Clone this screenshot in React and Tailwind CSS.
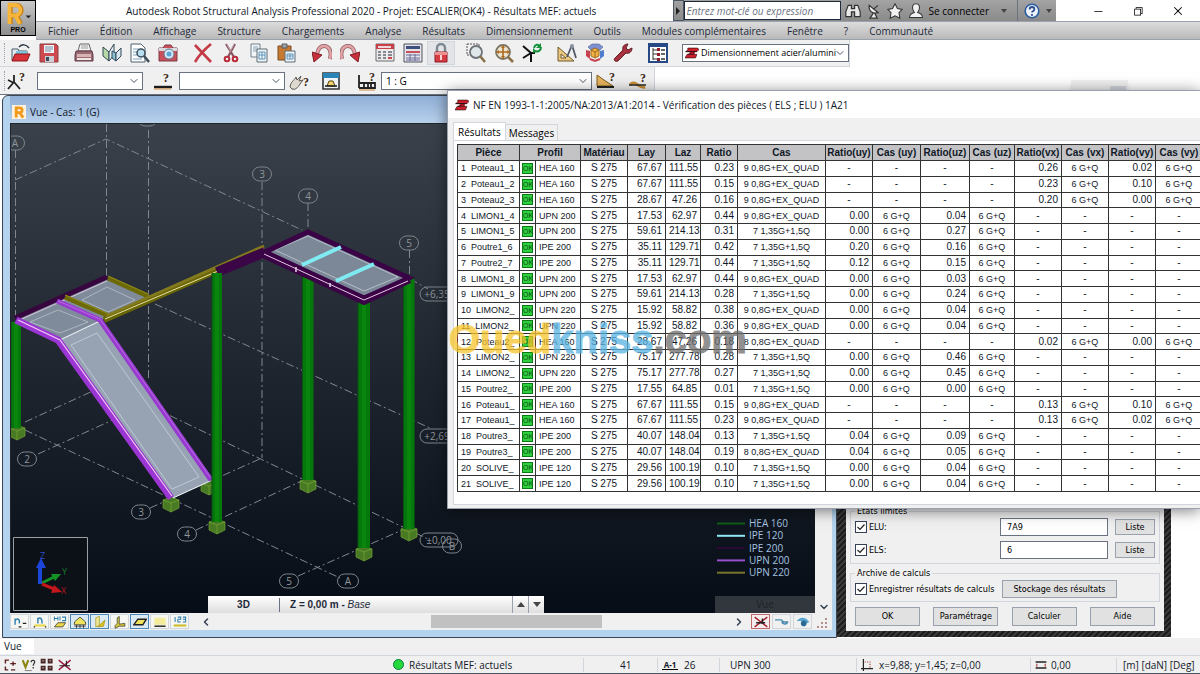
import React, { useState } from "react";
import { FiChevronDown, FiChevronLeft, FiChevronRight, FiChevronUp } from "react-icons/fi";
import { VscChromeClose, VscChromeMinimize, VscChromeRestore } from "react-icons/vsc";

const LOAD_QUAD = "9 0,8G+EX_QUAD";
const LOAD_QUAD_8 = "8 0,8G+EX_QUAD";
const LOAD_ELU = "7 1,35G+1,5Q";

const columns = [
  { label: "Lay", width: "w-[38px]" },
  { label: "Laz", width: "w-[35px]" },
  { label: "Ratio", width: "w-[37px]" },
  { label: "Cas", width: "w-[88px]" },
  { label: "Ratio(uy)", width: "w-[47px]" },
  { label: "Cas (uy)", width: "w-[48px]" },
  { label: "Ratio(uz)", width: "w-[49px]" },
  { label: "Cas (uz)", width: "w-[45px]" },
  { label: "Ratio(vx)", width: "w-[47px]" },
  { label: "Cas (vx)", width: "w-[47px]" },
  { label: "Ratio(vy)", width: "w-[47px]" },
  { label: "Cas (vy)", width: "w-[47px]" },
];

// name, profile, lay, laz, ratio, case, uy, uz, vx, vy
const members = [
  ["Poteau1_1", "HEA 160", "67.67", "111.55", "0.23", LOAD_QUAD, null, null, "0.26", "0.02"],
  ["Poteau1_2", "HEA 160", "67.67", "111.55", "0.15", LOAD_QUAD, null, null, "0.23", "0.10"],
  ["Poteau2_3", "HEA 160", "28.67", "47.26", "0.16", LOAD_QUAD, null, null, "0.20", "0.00"],
  ["LIMON1_4", "UPN 200", "17.53", "62.97", "0.44", LOAD_QUAD, "0.00", "0.04", null, null],
  ["LIMON1_5", "UPN 200", "59.61", "214.13", "0.31", LOAD_ELU, "0.00", "0.27", null, null],
  ["Poutre1_6", "IPE 200", "35.11", "129.71", "0.42", LOAD_ELU, "0.20", "0.16", null, null],
  ["Poutre2_7", "IPE 200", "35.11", "129.71", "0.44", LOAD_ELU, "0.12", "0.15", null, null],
  ["LIMON1_8", "UPN 200", "17.53", "62.97", "0.44", LOAD_QUAD, "0.00", "0.03", null, null],
  ["LIMON1_9", "UPN 200", "59.61", "214.13", "0.28", LOAD_ELU, "0.00", "0.24", null, null],
  ["LIMON2_", "UPN 220", "15.92", "58.82", "0.38", LOAD_QUAD, "0.00", "0.04", null, null],
  ["LIMON2_", "UPN 220", "15.92", "58.82", "0.36", LOAD_QUAD, "0.00", "0.04", null, null],
  ["Poteau2_", "HEA 160", "28.67", "47.26", "0.18", LOAD_QUAD_8, null, null, "0.02", "0.00"],
  ["LIMON2_", "UPN 220", "75.17", "277.78", "0.28", LOAD_ELU, "0.00", "0.46", null, null],
  ["LIMON2_", "UPN 220", "75.17", "277.78", "0.27", LOAD_ELU, "0.00", "0.45", null, null],
  ["Poutre2_", "IPE 200", "17.55", "64.85", "0.01", LOAD_ELU, "0.00", "0.00", null, null],
  ["Poteau1_", "HEA 160", "67.67", "111.55", "0.15", LOAD_QUAD, null, null, "0.13", "0.10"],
  ["Poteau1_", "HEA 160", "67.67", "111.55", "0.23", LOAD_QUAD, null, null, "0.13", "0.02"],
  ["Poutre3_", "IPE 200", "40.07", "148.04", "0.13", LOAD_ELU, "0.04", "0.09", null, null],
  ["Poutre3_", "IPE 200", "40.07", "148.04", "0.19", LOAD_QUAD_8, "0.04", "0.05", null, null],
  ["SOLIVE_", "IPE 120", "29.56", "100.19", "0.10", LOAD_ELU, "0.00", "0.04", null, null],
  ["SOLIVE_", "IPE 120", "29.56", "100.19", "0.10", LOAD_ELU, "0.00", "0.04", null, null],
];

const menus = [
  "Fichier", "Édition", "Affichage", "Structure", "Chargements", "Analyse", "Résultats",
  "Dimensionnement", "Outils", "Modules complémentaires", "Fenêtre", "?", "Communauté",
];

const legend = [
  ["HEA 160", "#0f5c14"],
  ["IPE 120", "#8fe9f0"],
  ["IPE 200", "#2d0a36"],
  ["UPN 200", "#9a4fd0"],
  ["UPN 220", "#77752a"],
];

/* ---------- icons ---------- */

const Icon = ({ size = "size-5", children }) => (
  <svg viewBox="0 0 20 20" className={`${size} shrink-0`} fill="none" aria-hidden="true">
    {children}
  </svg>
);

const OpenIcon = () => (
  <Icon>
    <path d="M1 17V6h6l1 2h8v3" fill="#dfeaf2" stroke="#4b5a66" />
    <path d="M8 4c3-3 7-3 10 1" stroke="#2b3947" strokeWidth="1.5" />
    <path d="M5 8h11v3H5z" fill="#7cc4dd" />
    <path d="M1 18l3-7h15l-3 7z" fill="#d8323a" stroke="#8d161d" />
  </Icon>
);
const SaveIcon = () => (
  <Icon>
    <path d="M1 1h16l2 2v16H1z" fill="#cf4a50" stroke="#8d3a42" />
    <path d="M5 2h10v8H5z" fill="#eef3f7" />
    <path d="M6 4h8M6 6h8M6 8h6" stroke="#7d93a8" />
    <path d="M6 13h9v6H6z" fill="#c8cfd6" />
    <path d="M7 14h3v4H7z" fill="#3a4a5c" />
  </Icon>
);
const PrintIcon = () => (
  <Icon>
    <path d="M6 1h9l2 7H4z" fill="#f4f4f4" stroke="#666" />
    <path d="M7 3h7M7 5h7" stroke="#999" />
    <path d="M2 8h16l1 4v6H1v-6z" fill="#9c6a72" stroke="#5b3b44" />
    <path d="M3 11h14v3H3z" fill="#d8b3b5" />
    <path d="M3 15h14v2H3z" fill="#ece6e6" />
  </Icon>
);
const BookIcon = () => (
  <Icon>
    <path d="M1 4l6 5v9l-6-5z" fill="#b7d9a6" stroke="#2f4756" />
    <path d="M7 9l5-8v11l-5 6z" fill="#e7f1f4" stroke="#2f4756" />
    <path d="M10 8l4 2v8l-4-3z" fill="#8fc4d6" stroke="#2f4756" />
    <path d="M14 10l5-5v8l-5 5z" fill="#d9e8ee" stroke="#2f4756" />
  </Icon>
);
const PreviewIcon = () => (
  <Icon>
    <path d="M1 1h10l4 4v14H1z" fill="#fff" stroke="#51616f" />
    <path d="M3 6h6M3 9h5M3 12h4M3 16h9" stroke="#7aa4c0" />
    <circle cx="11" cy="10" r="4" fill="#b9def0" stroke="#3b4c5b" strokeWidth="1.5" />
    <path d="M14 13l5 6" stroke="#3b4c5b" strokeWidth="2.5" />
  </Icon>
);
const CameraIcon = () => (
  <Icon>
    <path d="M1 5h4l2-3h6l2 3h4v13H1z" fill="#c9505a" stroke="#7c3b46" />
    <path d="M1 5h18v3H1z" fill="#d9d9de" />
    <circle cx="11" cy="11" r="5" fill="#d7e8f4" stroke="#5c7893" />
    <circle cx="11" cy="11" r="2.5" fill="#5aa4d6" />
  </Icon>
);
const DeleteIcon = () => (
  <Icon>
    <path d="M2 2l16 17M18 1C12 6 6 12 2 19" stroke="#c23b45" strokeWidth="2.6" />
  </Icon>
);
const CutIcon = () => (
  <Icon>
    <path d="M5 1l8 13M14 1L7 14" stroke="#8a5360" strokeWidth="2.2" />
    <path d="M6 1l4 8M13 1l-3 6" stroke="#d9c5c9" strokeWidth="0.8" />
    <circle cx="6" cy="16" r="2.3" stroke="#b92b38" strokeWidth="2" />
    <circle cx="14" cy="16" r="2.3" stroke="#b92b38" strokeWidth="2" />
  </Icon>
);
const CopyIcon = () => (
  <Icon>
    <path d="M2 1h9v13H2z" fill="#f3f6f8" stroke="#73808b" />
    <path d="M4 4h5M4 6h5M4 8h5" stroke="#8aa0b2" />
    <path d="M8 6h10v13H8z" fill="#eef4f8" stroke="#5d6c78" />
    <path d="M10 9h6v7h-6zM10 12h6M13 9v7" stroke="#5f93b8" />
  </Icon>
);
const PasteIcon = () => (
  <Icon>
    <path d="M1 3h13v14H1z" fill="#c77b32" stroke="#7a4a20" />
    <path d="M5 1h5v4H5z" fill="#9aa1a8" stroke="#5c5f63" />
    <path d="M8 8h10v11H8z" fill="#eef4f8" stroke="#5d6c78" />
    <path d="M10 11h6v5h-6zM10 13h6M13 11v5" stroke="#5f93b8" />
  </Icon>
);
const UndoIcon = () => (
  <Icon>
    <path d="M18 16c2-8-1-13-6-13-4 0-6 3-7 8" stroke="#8a5a60" strokeWidth="4" />
    <path d="M18 16c2-8-1-13-6-13-4 0-6 3-7 8" stroke="#e3a2a6" strokeWidth="2.6" />
    <path d="M0 9l10 3-8 7z" fill="#c9303a" stroke="#7d1e27" />
  </Icon>
);
const RedoIcon = () => (
  <Icon>
    <path d="M2 16C0 8 3 3 8 3c4 0 6 3 7 8" stroke="#8a5a60" strokeWidth="4" />
    <path d="M2 16C0 8 3 3 8 3c4 0 6 3 7 8" stroke="#e3a2a6" strokeWidth="2.6" />
    <path d="M20 9l-10 3 8 7z" fill="#c9303a" stroke="#7d1e27" />
  </Icon>
);
const CalcIcon = () => (
  <Icon>
    <path d="M1 1h18v17H1z" fill="#eceaea" stroke="#6d6f75" />
    <path d="M1 1h18v5H1z" fill="#c84149" />
    <path d="M3 3h13v2H3z" fill="#f0d7d8" />
    <path d="M3 9h3M8 9h3M13 9h4M3 12h3M8 12h3M13 12h4M3 15h3M8 15h3" stroke="#858a92" strokeWidth="1.8" />
    <path d="M13 15h4" stroke="#c8323c" strokeWidth="1.8" />
  </Icon>
);
const CalcTableIcon = () => (
  <Icon>
    <path d="M1 1h18v18H1z" fill="#e5e3ea" stroke="#4f5260" />
    <path d="M3 3h14v3H3z" fill="#3d4f7c" />
    <path d="M3 9h14" stroke="#c8505a" strokeWidth="2" />
    <path d="M3 12h14M3 15h14M3 17h14M7 11v7M12 11v7" stroke="#6c6f9b" />
  </Icon>
);
const LockIcon = () => (
  <Icon>
    <path d="M6 10V5a4 4 0 018 0v5" stroke="#7d8890" strokeWidth="2.4" />
    <path d="M4 9h12v10H4z" fill="#d83a42" stroke="#8d1c25" />
    <path d="M4 9h12v3H4z" fill="#ee8f92" />
    <path d="M10 12v5" stroke="#fff" strokeWidth="1.6" />
  </Icon>
);
const ZoomWindowIcon = () => (
  <Icon>
    <path d="M1 1h12v11H1z" stroke="#555" strokeDasharray="2 1" />
    <circle cx="10" cy="9" r="6" fill="#dfe7ea" stroke="#6d7478" strokeWidth="1.8" />
    <path d="M14 13l5 6" stroke="#8a7145" strokeWidth="2.6" />
  </Icon>
);
const ZoomPanIcon = () => (
  <Icon>
    <circle cx="9" cy="9" r="7" fill="#ece5d3" stroke="#7b7465" strokeWidth="1.8" />
    <path d="M9 5v8M5 9h8" stroke="#b06b1c" strokeWidth="1.6" />
    <path d="M9 2l2 3H7zM9 16l2-3H7zM2 9l3-2v4zM16 9l-3-2v4z" fill="#b06b1c" />
    <path d="M14 14l5 5" stroke="#8a7145" strokeWidth="2.6" />
  </Icon>
);
const RefreshAxisIcon = () => (
  <Icon>
    <path d="M1 3l8 7v9M9 10l-8 5M9 10h4" stroke="#111" strokeWidth="2" />
    <path d="M12 5c1-4 4-4 6-2M19 4c0 4-3 5-6 4" stroke="#14913a" strokeWidth="2" />
    <path d="M19 0v5h-5zM11 10V5l4 4z" fill="#14913a" />
  </Icon>
);
const DesignIcon = () => (
  <Icon>
    <path d="M1 4v14h16z" fill="#ecc77d" stroke="#6f5a2f" />
    <path d="M4 11v4h5z" fill="#f5f3ee" stroke="#6f5a2f" />
    <path d="M15 2l-5 12M15 2l4 13" stroke="#52596a" strokeWidth="1.8" />
    <circle cx="15" cy="3" r="2" fill="#8c93a3" />
  </Icon>
);
const CubeIcon = () => (
  <Icon>
    <path d="M3 4l4-3h7l4 3-3 3H6z" fill="#7d90cf" stroke="#50609c" strokeWidth="0.6" />
    <path d="M1 7l4 1v8l-4-3z" fill="#c8434d" />
    <path d="M19 7l-4 1v8l4-3z" fill="#4d7fcc" />
    <path d="M6 7l4-2 4 2v6l-4 2-4-2z" fill="#f1b347" stroke="#9c6a1c" />
    <path d="M6 7l4 2 4-2M10 9v6" stroke="#9c6a1c" />
    <path d="M5 16l5 2 5-2" stroke="#c8434d" strokeWidth="2" />
  </Icon>
);
const WrenchIcon = () => (
  <Icon>
    <path d="M2 15l8-8c-1-3 1-6 5-6l-2 4 2 2 4-2c0 4-3 6-6 5l-8 8c-3 1-5-1-3-3z" fill="#a8323d" stroke="#5e1f28" />
  </Icon>
);
const TreeIcon = () => (
  <Icon>
    <path d="M1 1h18v18H1z" fill="#fff" stroke="#274a86" strokeWidth="2" />
    <path d="M2 3h16" stroke="#274a86" strokeWidth="2" />
    <path d="M5 5v12M5 7h4M5 11h4M5 16h4" stroke="#333" />
    <path d="M9 5h3v3H9zM9 10h3v3H9zM9 15h3v3H9z" fill="#8e1c29" />
    <path d="M13 7h4M13 11h4M13 16h4" stroke="#333" strokeWidth="1.6" />
  </Icon>
);
// steel I section seen in perspective
const BeamIcon = ({ size = "size-4" }) => (
  <Icon size={size}>
    <path d="M4 3h14l2 2-3 3H1l3-2z" fill="#d01f2c" stroke="#3b1418" />
    <path d="M7 8h7v5H6z" fill="#a81823" />
    <path d="M3 12h14l-2 5H0z" fill="#d01f2c" stroke="#3b1418" />
    <path d="M1 8h16M4 12l4-1" stroke="#2a0d10" strokeWidth="1.4" />
  </Icon>
);
const Question = ({ x = 12, y = 10 }) => (
  <text x={x} y={y} fill="#3a2510" fontSize="12" fontWeight="700" fontFamily="Liberation Serif, serif">?</text>
);
const NodeIcon = () => (
  <Icon>
    <path d="M7 4v7L1 18M7 11l6 7M1 9l6 3" stroke="#222" strokeWidth="1.8" />
    <Question />
  </Icon>
);
const BarIcon = () => (
  <Icon>
    <path d="M1 16h18" stroke="#1b1b1b" strokeWidth="2.4" />
    <path d="M1 18h17" stroke="#d28a3b" />
    <Question x={10} y={11} />
  </Icon>
);
const HandIcon = () => (
  <Icon>
    <path d="M1 16c1-6 4-6 6-10l1 3 4-4-2 5 4-1-3 4c-2 4-5 6-8 5z" fill="#ded9cf" stroke="#5c574e" />
    <Question x={14} y={15} />
  </Icon>
);
const SupportIcon = () => (
  <Icon>
    <path d="M2 2h16v16H2z" fill="#eef3f6" stroke="#333" strokeWidth="1.6" />
    <path d="M2 2h16v5H2z" fill="#2a84b8" />
    <path d="M6 15l2-5h4l2 5z" fill="#f0d36b" stroke="#554411" />
    <path d="M4 15h12" stroke="#222" strokeWidth="1.6" />
  </Icon>
);
const CaseIcon = () => (
  <Icon>
    <path d="M2 4v13M2 17h16v-5H7v5M2 12h5M11 12v5M14 12v5" stroke="#222" strokeWidth="1.8" />
    <path d="M2 19h16" stroke="#c88a3f" />
    <Question />
  </Icon>
);
const DiagramIcon = () => (
  <Icon>
    <path d="M1 4v11h16L8 9z" fill="#e6b45d" stroke="#7d5a20" />
    <path d="M1 16h17" stroke="#222" strokeWidth="2" />
    <Question x={13} y={10} />
  </Icon>
);
const DeflectIcon = () => (
  <Icon>
    <path d="M2 14c5-6 9 4 15 2" stroke="#c98d2e" strokeWidth="3" />
    <path d="M1 14h17" stroke="#333" strokeWidth="1.6" />
    <Question x={12} y={11} />
  </Icon>
);

/* ---------- shared controls ---------- */

const ToolButton = ({ label, icon: Glyph, start, pressed }) => (
  <button
    type="button"
    aria-label={label}
    className={`flex h-6 w-7 items-center justify-center ${start ? "ml-[7px]" : ""} ${pressed ? "border border-gray-300 bg-[#e2e4e8]" : ""}`}
  >
    <Glyph />
  </button>
);

const Combo = ({ label, options, className, selectClassName = "pr-3 pl-1", children }) => (
  <span className={`relative flex h-[18px] items-center border border-gray-500 bg-white ${className}`}>
    {children}
    <select
      aria-label={label}
      className={`h-full w-full min-w-0 appearance-none bg-transparent outline-none ${selectClassName}`}
    >
      {options.map((o) => (
        <option key={o}>{o}</option>
      ))}
    </select>
    <FiChevronDown className="pointer-events-none absolute right-0.5 size-3 text-gray-600" />
  </span>
);

const Grip = () => <span className="mr-0.5 ml-1 h-5 w-px border-l border-dotted border-gray-400" />;

const PushButton = ({ children, className }) => (
  <button type="button" className={`border border-gray-400 bg-[#e1e1e1] ${className}`}>
    {children}
  </button>
);

const CheckField = ({ label, className = "" }) => {
  const [checked, setChecked] = useState(true);
  return (
    <label className={`flex items-center gap-0.5 whitespace-nowrap ${className}`}>
      <span className="relative flex">
        <input
          type="checkbox"
          checked={checked}
          onChange={() => setChecked(!checked)}
          className="size-3 appearance-none border border-gray-700 bg-white"
        />
        {checked && (
          <svg viewBox="0 0 12 12" className="pointer-events-none absolute inset-0" fill="none">
            <path d="M2.5 6l2.5 2.5L9.5 3.5" stroke="#222" strokeWidth="1.2" />
          </svg>
        )}
      </span>
      {label}
    </label>
  );
};

/* ---------- header ---------- */

const Header = () => (
  <header className="flex bg-white">
    <button
      type="button"
      aria-label="Menu application"
      className="flex h-9 w-9 shrink-0 flex-col items-center border border-black bg-gradient-to-b from-[#c9c9c9] to-[#8f8f8f]"
    >
      <svg viewBox="0 0 36 26" className="h-[25px] w-full" fill="none">
        <path d="M10 24V4h6a5 5 0 010 11h-6M16 15l5 9" stroke="#c77f14" strokeWidth="5" />
        <path d="M9 24V4h6a5 5 0 010 11H9M15 15l5 9" stroke="#f6b63c" strokeWidth="4" />
        <path d="M26 15h6l-3 3z" fill="#222" />
      </svg>
      <span className="font-['Liberation_Sans',sans-serif] text-[7px] leading-2 font-bold text-black">PRO</span>
    </button>
    <div className="min-w-0 flex-1">
      <div className="flex h-[21px] items-center">
        <h1 className="flex-1 pl-[90px] whitespace-nowrap text-gray-900">
          Autodesk Robot Structural Analysis Professional 2020 - Projet: ESCALIER(OK4) - Résultats MEF: actuels
        </h1>
        <div className="flex h-full items-center bg-gradient-to-b from-[#a3a3a3] to-[#8a8a8a]">
          <span className="flex h-full w-[11px] items-center justify-center border border-gray-600">
            <svg viewBox="0 0 6 8" className="h-2 w-1.5"><path d="M1 0l4 4-4 4z" fill="#222" /></svg>
          </span>
          <input
            aria-label="Recherche"
            placeholder="Entrez mot-clé ou expression"
            className="h-[19px] w-[157px] border border-gray-800 bg-white px-0.5 italic placeholder:text-gray-500"
          />
          <div className="flex items-center gap-[5px] pl-1">
            <Icon size="size-4">
              <path d="M4 3h4v4h4V3h4l3 8v6h-7v-6H8v6H1v-6z" fill="#e9e9e9" stroke="#333" strokeWidth="1.5" />
            </Icon>
            <Icon size="size-4">
              <path d="M4 3c-1 7 4 11 11 9zM9 13l-4 6h9l-3-6M9 8l6-5" fill="#e9e9e9" stroke="#333" strokeWidth="1.5" />
            </Icon>
            <Icon size="size-4">
              <path d="M10 1l3 6 6 1-4 4 1 7-6-3-6 3 1-7-4-4 6-1z" fill="#f2f2f2" stroke="#333" strokeWidth="1.3" />
            </Icon>
            <Icon size="size-4">
              <path d="M10 1c4 0 5 3 4 7l-2 4c4 1 6 2 6 6H2c0-4 2-5 6-6L6 8c-1-4 0-7 4-7z" fill="#f2f2f2" stroke="#333" strokeWidth="1.3" />
            </Icon>
            <button type="button" className="text-black">Se connecter</button>
          </div>
          <svg viewBox="0 0 6 4" className="ml-3 h-1 w-1.5"><path d="M0 0h6L3 4z" fill="#444" /></svg>
          <span className="ml-2.5 flex h-full items-center border-l border-gray-500 pl-1.5">
            <Icon size="size-4">
              <circle cx="10" cy="10" r="8.5" fill="#f0f4fa" stroke="#2a5d9f" strokeWidth="2" />
              <path d="M7 8c0-4 6-4 6 0 0 2-3 2-3 4" stroke="#2a4d8f" strokeWidth="2.2" />
              <circle cx="10" cy="15" r="1.4" fill="#2a4d8f" />
            </Icon>
            <svg viewBox="0 0 6 4" className="mr-1 ml-1.5 h-1 w-1.5"><path d="M0 0h6L3 4z" fill="#444" /></svg>
          </span>
        </div>
        <div className="flex w-36 pl-[22px]">
          <button type="button" aria-label="Réduire" className="w-10"><VscChromeMinimize className="mx-auto size-3" /></button>
          <button type="button" aria-label="Restaurer" className="w-10"><VscChromeRestore className="mx-auto size-3" /></button>
          <button type="button" aria-label="Fermer" className="w-10"><VscChromeClose className="mx-auto size-3" /></button>
        </div>
      </div>
      <nav className="flex h-[19px] items-center gap-[21px] border-y border-gray-400 bg-gradient-to-b from-[#dcdcdc] to-[#b9b9b9] pl-3 whitespace-nowrap text-gray-800">
        {menus.map((m) => (
          <a key={m} href="#menu">{m}</a>
        ))}
      </nav>
    </div>
  </header>
);

const Toolbars = () => (
  <div className="bg-white">
    <div className="flex h-[27px] w-fit items-center border-r border-b border-gray-300 bg-[#f0f0f0]">
      <Grip />
      <ToolButton label="Ouvrir" icon={OpenIcon} />
      <ToolButton label="Enregistrer" icon={SaveIcon} />
      <ToolButton label="Imprimer" icon={PrintIcon} start />
      <ToolButton label="Composition" icon={BookIcon} />
      <ToolButton label="Aperçu" icon={PreviewIcon} />
      <ToolButton label="Capture" icon={CameraIcon} />
      <ToolButton label="Supprimer" icon={DeleteIcon} start />
      <ToolButton label="Couper" icon={CutIcon} />
      <ToolButton label="Copier" icon={CopyIcon} />
      <ToolButton label="Coller" icon={PasteIcon} />
      <ToolButton label="Annuler" icon={UndoIcon} start />
      <ToolButton label="Rétablir" icon={RedoIcon} />
      <ToolButton label="Calculs" icon={CalcIcon} start />
      <ToolButton label="Tableaux" icon={CalcTableIcon} />
      <ToolButton label="Verrouiller" icon={LockIcon} pressed />
      <ToolButton label="Zoom fenêtre" icon={ZoomWindowIcon} start />
      <ToolButton label="Zoom panoramique" icon={ZoomPanIcon} />
      <ToolButton label="Actualiser" icon={RefreshAxisIcon} />
      <ToolButton label="Dessin" icon={DesignIcon} start />
      <ToolButton label="Vue 3D" icon={CubeIcon} />
      <ToolButton label="Outils" icon={WrenchIcon} />
      <ToolButton label="Inspecteur" icon={TreeIcon} start />
      <Combo
        label="Bureau"
        options={["Dimensionnement acier/alumini"]}
        className="ml-2.5 w-[167px] text-[9px]"
        selectClassName="pl-0.5"
      >
        <span className="shrink-0 pl-0.5"><BeamIcon size="size-3.5" /></span>
      </Combo>
    </div>
    <div className="flex h-[27px] w-fit items-center gap-1 border-r border-gray-300 bg-[#f0f0f0] pr-1.5">
      <div className="flex items-center pr-1.5">
        <Grip />
        <NodeIcon />
      </div>
      <Combo label="Noeuds" options={[""]} className="w-[106px]" />
      <div className="flex items-center gap-1.5 pl-1.5">
        <BarIcon />
        <Combo label="Barres" options={[""]} className="w-[106px]" />
      </div>
      <HandIcon />
      <span className="pl-2"><SupportIcon /></span>
      <div className="flex items-center gap-1 pl-3">
        <CaseIcon />
        <Combo label="Cas de charge" options={["1 : G"]} className="w-[211px]" />
      </div>
      <DiagramIcon />
      <span className="pl-2"><DeflectIcon /></span>
    </div>
  </div>
);

/* ---------- 3D view ---------- */

const Bubble = ({ x, y, w = 19, children }) => (
  <g>
    <rect x={x - w / 2} y={y - 7} width={w} height="14" rx="7" stroke="#7d858c" />
    <text x={x} y={y + 4} textAnchor="middle" fill="#8f969c" fontSize="10">{children}</text>
  </g>
);

const Column = ({ x, top, bottom, w = 11 }) => (
  <g>
    <path d={`M${x - w / 2} ${top}h${w}V${bottom}h-${w}z`} fill="#05780b" />
    <path d={`M${x - 2} ${top}h4V${bottom}h-4z`} fill="#0a860f" />
    <path d={`M${x - w / 2} ${top}V${bottom}`} stroke="#0b4f16" />
  </g>
);

const Footing = ({ x, y }) => (
  <g stroke="#7fae3c" strokeWidth="0.6">
    <path d={`M${x - 8} ${y - 4}l8-3 8 3v8l-8 4-8-4z`} fill="#477a22" />
    <path d={`M${x - 8} ${y - 4}l8 3 8-3M${x} ${y - 1}v9`} fill="none" />
  </g>
);

const Model = () => (
  <svg
    viewBox="11 124 804 490"
    preserveAspectRatio="xMinYMin slice"
    className="absolute inset-0 h-full w-full"
    fill="none"
    fontFamily="Open Sans, sans-serif"
    aria-label="Modèle 3D"
  >
    <g stroke="#7f878f" strokeDasharray="8 3 2 3">
      <path d="M15.500 150V320M106.500 124V276M148.500 130V381M262 182V458M308 203V230M409.500 250V276" />
      <path d="M15 180l91-41 196 91M410 279l18 10" />
      <path d="M155 304l275 124M25 422l81-37 324 155" />
      <path d="M25 430l315 148M38 454l90-41M150 508l112-50M196 530l112-52M298 576l111-49" />
    </g>
    <Bubble x={15} y={143}>A</Bubble>
    <rect x="138" y="112" width="19" height="14" rx="7" stroke="#7d858c" />
    <Bubble x={262} y={174}>3</Bubble>
    <Bubble x={308} y={196}>4</Bubble>
    <Bubble x={409} y={243}>5</Bubble>
    <Bubble x={437} y={294} w={34}>+6,35</Bubble>
    <Bubble x={437} y={436} w={34}>+2,69</Bubble>
    <Bubble x={439} y={540} w={38}>±0,00</Bubble>
    <Bubble x={452} y={546}>B</Bubble>
    <Bubble x={27} y={459}>2</Bubble>
    <Bubble x={141} y={512}>3</Bubble>
    <Bubble x={187} y={534}>4</Bubble>
    <Bubble x={289} y={581}>5</Bubble>
    <Bubble x={348} y={581} w={21}>A</Bubble>

    <Footing x={17} y={432} />
    <Footing x={209} y={487} />
    <Footing x={171} y={504} />
    <Footing x={217} y={526} />
    <Footing x={308} y={485} />
    <Footing x={409} y={533} />
    <Footing x={364} y={553} />
    <Column x={16} top={322} bottom={428} w={10} />
    <Column x={308} top={262} bottom={480} />
    <Column x={409} top={278} bottom={529} />
    <Column x={364} top={298} bottom={548} w={12} />

    {/* intermediate landing */}
    <path d="M18 318l88-39 40 18-44 23-42 20z" fill="#7f8b9b" />
    <path d="M30 322l28-12 30 12-28 11zM82 300l25-13 28 13-27 12z" stroke="#b5c0c9" strokeWidth="0.8" />
    <path d="M15 318l92-41" stroke="#38063f" strokeWidth="5" />
    <path d="M22 319l85-38" stroke="#e3d5e5" strokeWidth="0.8" />
    <path d="M108 278l40 18M65 297l44 19" stroke="#6d6a06" strokeWidth="5" />
    <path d="M108 276l40 18M65 295l44 19" stroke="#8f8b1c" />
    <path d="M104 320L264 250" stroke="#6a6604" strokeWidth="6" />
    <path d="M106 316L264 246" stroke="#837a1d" strokeWidth="3" />
    <path d="M105 319l113-48" stroke="#e7e3a5" />
    <path d="M217 269l47-21" stroke="#a2702c" strokeWidth="1.500" />

    {/* stair flight */}
    <path d="M58 340l42-20 111 161-38 17z" fill="#97a3b3" />
    <path d="M71 345l26-12 102 144-27 12z" stroke="#c6d3dd" strokeWidth="0.8" />
    <path d="M60 340l40-19M173 498l37-17" stroke="#eef2f5" />
    <path d="M57 301l43 19 111 160" stroke="#9839cf" strokeWidth="5" />
    <path d="M58 301l42 18 110 158" stroke="#bd7be8" strokeWidth="0.8" />
    <path d="M16 320l42 20 113 158" stroke="#9b35d3" strokeWidth="7" />
    <path d="M18 320l42 20 112 156" stroke="#f1c8f5" strokeWidth="1.200" />

    {/* upper landing */}
    <path d="M217 272l48-20" stroke="#3a0645" strokeWidth="10" />
    <path d="M265 252l43-20 101 46-45 20z" fill="#7c8898" />
    <path d="M275 250l33-14 90 41-34 14z" stroke="#c2ccd4" strokeWidth="0.8" />
    <path d="M265 252l43-20 101 46-45 20z" stroke="#3a0345" strokeWidth="5" />
    <path d="M263 255l101 47 46-22" stroke="#3a0345" strokeWidth="6" />
    <path d="M302 265l39-18M336 281l38-17" stroke="#80eaf2" strokeWidth="4" />
    <path d="M264 254l100 46 44-19" stroke="#ecc5e8" />
    <path d="M296 267v5M330 283v4" stroke="#e6d8ea" strokeWidth="1.500" />
    <Column x={217} top={273} bottom={522} w={10} />

    {/* profile legend */}
    {legend.map(([name, color], i) => (
      <g key={name}>
        <path d={`M717 ${523.500 + i * 12.300}h28`} stroke={color} strokeWidth="2" />
        <text x="749" y={527 + i * 12.300} fill="#a5c3e0" fontSize="10">{name}</text>
      </g>
    ))}

    {/* axis triad */}
    <path d="M13.500 537.500h74v73h-74z" fill="#0c1118" stroke="#9ba0a6" />
    <path d="M40 584v-18" stroke="#1c46d8" strokeWidth="4" />
    <path d="M41 558l5 10H36z" fill="#1c46d8" />
    <path d="M42 583l12-6" stroke="#159226" strokeWidth="3" />
    <path d="M51 574l10 0-6 7z" fill="#159226" />
    <path d="M42 584l12 5" stroke="#c5161b" strokeWidth="3" />
    <path d="M54 585l8 7-11 1z" fill="#c5161b" />
    <text x="40" y="559" fill="#2b4fd0" fontSize="9">Z</text>
    <text x="62" y="575" fill="#1c7a2c" fontSize="9">Y</text>
    <text x="61" y="594" fill="#b0191d" fontSize="9">X</text>
  </svg>
);

const viewToggles = [
  ["Numéros de noeuds", false, <><path d="M3 14V5M3 8c3-4 7-3 6 4" stroke="#2f7fae" strokeWidth="2" /><path d="M8 17h4M14 12h5" stroke="#222" strokeWidth="2" /></>],
  ["Numéros de barres", false, <><path d="M7 12V4M7 6c3-3 6-2 6 6" stroke="#2f7fae" strokeWidth="2" /><path d="M2 15h16" stroke="#e9d84a" strokeWidth="3" /><path d="M1 17h2M17 17h2" stroke="#222" strokeWidth="2" /></>],
  ["Profils", false, <><path d="M2 8V2M7 8V2M2 5h5M10 8V2M13 3h5v5h-5" stroke="#2f7fae" strokeWidth="1.500" /><path d="M2 17l5-6h11l-4 6z" fill="#e9d84a" stroke="#222" /></>],
  ["Appuis", true, <><path d="M10 3l8 7v4H2v-4z" fill="#efe25c" stroke="#222" /><path d="M2 16h16M5 14v5M10 14v5M15 14v5" stroke="#222" /></>],
  ["Charges", true, <><path d="M4 4v13l5-2V2z" fill="#f4ec9a" stroke="#a08d10" /><path d="M7 17l10-10-2 9z" fill="#e0c51c" stroke="#a08d10" /></>],
  ["Repères locaux", false, <path d="M9 2v11l8-1v4H9l-6 3v-4l3-3V4z" fill="#d6c63b" stroke="#333" />],
  ["Panneaux", true, <path d="M1 14l6-8h12l-5 8z" fill="#efe25c" stroke="#222" strokeWidth="2" />],
  ["Croquis", false, <><path d="M2 4h16v10H2z" fill="#f4ec9a" /><path d="M2 16h16" stroke="#222" strokeWidth="2" /></>],
  ["Valeurs", false, <><path d="M3 3v7M7 3h4v3H7v4h4M14 3h4v7h-4M14 6h4" stroke="#2f7fae" strokeWidth="1.500" /><path d="M1 15h18" stroke="#cdbc2d" strokeWidth="3" /></>],
];

const ViewWindow = () => (
  <section className="flex min-w-0 flex-col rounded-t-md border border-[#3d4650] bg-[#b3d3ee] p-1 pb-[7px] pl-[7px]">
    <div className="-mt-1 flex h-[27px] items-center gap-1 bg-gradient-to-b from-[#90afd6] to-[#b8d1ec] pt-1 pl-0.5 text-gray-900">
      <Icon size="size-3.5">
        <path d="M0 0h20v20H0z" fill="#fff2dc" />
        <path d="M6 18V4h5a3 3 0 010 7H6M11 11l5 7" stroke="#ef9a1c" strokeWidth="4" />
      </Icon>
      <h2>Vue - Cas: 1 (G)</h2>
    </div>
    <div className="flex min-h-0 flex-1">
      <div className="relative flex-1 overflow-hidden border-t border-l border-[#20262c] bg-gradient-to-b from-[#3a414a] to-[#070d16]">
        <Model />
        <div className="absolute bottom-0 left-[197px] flex h-[17px] w-[336px] items-center bg-gradient-to-b from-white to-[#dedede] font-['Liberation_Sans',sans-serif] font-bold text-gray-800">
          <span className="w-[72px] border-r border-gray-500 text-center">3D</span>
          <span className="flex-1 pl-2.5">Z = 0,00 m - <i className="font-normal">Base</i></span>
          <button type="button" aria-label="Niveau supérieur" className="flex h-full w-4 items-center justify-center border-l border-gray-400">
            <svg viewBox="0 0 8 5" className="w-2"><path d="M4 0l4 5H0z" fill="#444" /></svg>
          </button>
          <button type="button" aria-label="Niveau inférieur" className="flex h-full w-4 items-center justify-center border-l border-gray-400">
            <svg viewBox="0 0 8 5" className="w-2"><path d="M0 0h8L4 5z" fill="#444" /></svg>
          </button>
        </div>
        <div className="absolute right-0 bottom-0 h-[17px] w-[100px] bg-[#32373e] text-center leading-4 text-[#1e2227]">Vue</div>
      </div>
      <div className="flex w-[17px] flex-col items-center justify-end bg-[#f0f0f0]">
        <FiChevronUp className="mb-auto size-3" />
        <FiChevronDown className="size-3 stroke-[3] text-gray-700" />
      </div>
    </div>
    <div className="flex h-[17px] items-center bg-[#f0f0f0]">
      {viewToggles.map(([label, on, glyph]) => (
        <button
          key={label}
          type="button"
          aria-label={label}
          className={`mr-px flex h-[15px] w-[19px] items-center justify-center border ${on ? "border-[#4a87b8] bg-[#dbe9f3]" : "border-gray-300 bg-[#f6f6f2]"}`}
        >
          <Icon size="size-3.5">{glyph}</Icon>
        </button>
      ))}
      <FiChevronLeft className="ml-2.5 size-3 stroke-[3] text-gray-700" />
      <div className="flex h-full flex-1 items-center px-1 pl-[219px]">
        <div className="h-[13px] w-[171px] bg-[#c1c1c1]" />
      </div>
      <FiChevronRight className="mr-1.5 size-3 stroke-[3] text-gray-700" />
      <button type="button" aria-label="Attributs" className="mr-0.5 flex h-[15px] w-[19px] items-center justify-center border border-[#c06a6a] bg-[#f6eeee]">
        <Icon size="size-3.5"><path d="M1 3l18 14M19 3L1 17" stroke="#a3202b" strokeWidth="2" /><path d="M3 11h13M12 5v8" stroke="#222" strokeWidth="2" /></Icon>
      </button>
      <button type="button" aria-label="Lunettes" className="mr-0.5 flex h-[15px] w-[19px] items-center justify-center border border-gray-300">
        <Icon size="size-3.5"><path d="M0 7h9c1 0 2 3 4 3h6M10 9c0 5 7 5 8 1" stroke="#4a8bb0" strokeWidth="2" /></Icon>
      </button>
      <button type="button" aria-label="Affichage" className="flex h-[15px] w-[19px] items-center justify-center border border-gray-300">
        <Icon size="size-3.5"><path d="M1 9c4-7 13-7 18 1l-4 2c-3-4-9-4-14-3z" fill="#58a6cf" /><circle cx="11" cy="12" r="4" fill="#2a6c96" /></Icon>
      </button>
      <svg viewBox="0 0 12 12" className="mr-1 ml-1 size-3" fill="#b5908c"><path d="M9 2h2v2H9zM9 6h2v2H9zM9 10h2v2H9zM5 6h2v2H5zM5 10h2v2H5zM1 10h2v2H1z" /></svg>
    </div>
  </section>
);

/* ---------- floating windows ---------- */

const CalcWindow = () => (
  <section className="flex h-full w-[334px] flex-col justify-end bg-[#2b2b2b] bg-[repeating-linear-gradient(135deg,#1d1d1d_0_2px,#3a3a3a_2px_4px)] pr-[7px] pb-1.5 pl-[9px] font-['DejaVu_Sans_Condensed','DejaVu_Sans',sans-serif] text-[9px] leading-[13px]">
    <form className="flex h-full flex-col justify-end gap-[3px] bg-[#f0f0f0] px-1 pb-[5px]">
      <fieldset className="border border-gray-300 px-1 pb-1">
        <legend className="px-0.5">Etats limites</legend>
        <div className="flex flex-col gap-[5px]">
          {[["ELU:", "7A9"], ["ELS:", "6"]].map(([label, value]) => (
            <div key={label} className="flex items-center">
              <CheckField label={label} className="flex-1" />
              <input
                aria-label={`Liste ${label}`}
                defaultValue={value}
                className="mr-[7px] h-[18px] w-[108px] border border-gray-500 bg-white px-1.5"
              />
              <PushButton className="h-4 w-10">Liste</PushButton>
            </div>
          ))}
        </div>
      </fieldset>
      <fieldset className="border border-gray-300 px-1 pb-[3px]">
        <legend className="px-0.5">Archive de calculs</legend>
        <div className="flex items-center">
          <CheckField label="Enregistrer résultats de calculs" className="w-[147px]" />
          <PushButton className="h-[18px] w-[115px] whitespace-nowrap">Stockage des résultats</PushButton>
        </div>
      </fieldset>
      <div className="flex justify-between px-[5px] pt-0.5">
        {["OK", "Paramétrage", "Calculer", "Aide"].map((b) => (
          <PushButton key={b} className="h-[19px] w-[65px]">{b}</PushButton>
        ))}
      </div>
    </form>
  </section>
);

const Cell = ({ children, className = "" }) => (
  <td className={`overflow-hidden border border-[#333] bg-white px-[3px] py-0 whitespace-pre ${className}`}>{children}</td>
);

const ValueCell = ({ value }) => (
  <Cell className={value ? "text-right text-[10px]" : "text-center text-[10px]"}>{value || "-"}</Cell>
);

const LoadCell = ({ value }) => (
  <Cell className={value ? "text-center" : "text-center text-[10px]"}>{value ? "6 G+Q" : "-"}</Cell>
);

const ResultsTable = () => (
  <table className="h-[348px] w-[746px] table-fixed border-collapse font-['Liberation_Sans',Arial,sans-serif] text-[9px] leading-3 text-gray-900">
    <colgroup>
      <col className="w-[62px]" />
      <col className="w-4" />
      <col className="w-[45px]" />
      <col className="w-[47px]" />
      {columns.map((c) => (
        <col key={c.label} className={c.width} />
      ))}
    </colgroup>
    <thead className="bg-[#c3c3c5] text-[10px]">
      <tr className="h-4">
        <th className="border border-[#333] p-0">Pièce</th>
        <th colSpan={2} className="border border-[#333] p-0">Profil</th>
        <th className="border border-[#333] p-0">Matériau</th>
        {columns.map((c) => (
          <th key={c.label} className="border border-[#333] p-0 whitespace-nowrap">{c.label}</th>
        ))}
      </tr>
    </thead>
    <tbody>
      {members.map(([name, profile, lay, laz, ratio, load, uy, uz, vx, vy], i) => (
        <tr key={i}>
          <Cell>{`${i + 1}  ${name}`}</Cell>
          <td className="border border-[#333] bg-white p-0">
            <span className="mx-auto block size-[11px] border border-[#0b7a16] bg-[#2fd040] text-center text-[7px] leading-[9px] text-[#0b4d12]">OK</span>
          </td>
          <Cell>{profile}</Cell>
          <Cell className="text-center text-[10px]">S 275</Cell>
          <ValueCell value={lay} />
          <ValueCell value={laz} />
          <ValueCell value={ratio} />
          <Cell className="text-center">{load}</Cell>
          <ValueCell value={uy} />
          <LoadCell value={uy} />
          <ValueCell value={uz} />
          <LoadCell value={uz} />
          <ValueCell value={vx} />
          <LoadCell value={vx} />
          <ValueCell value={vy} />
          <LoadCell value={vy} />
        </tr>
      ))}
    </tbody>
  </table>
);

const ResultsWindow = () => (
  <section className="absolute top-[90px] right-0 left-[447px] overflow-hidden border border-r-0 border-gray-400 bg-[#f0f0f0] pb-[3px] shadow-[0_2px_14px_rgba(0,0,0,0.5)]">
    <div className="flex h-[27px] items-center gap-1 bg-white pl-[7px] text-gray-900">
      <BeamIcon size="size-3.5" />
      <h2 className="whitespace-nowrap">NF EN 1993-1-1:2005/NA:2013/A1:2014 - Vérification des pièces ( ELS ; ELU ) 1A21</h2>
    </div>
    <div role="tablist" className="flex items-end pt-1 pl-[5px] leading-4">
      <button type="button" role="tab" aria-selected="true" className="h-[18px] border border-b-0 border-gray-300 bg-white px-1">Résultats</button>
      <button type="button" role="tab" aria-selected="false" className="h-4 border border-b-0 border-l-0 border-gray-300 px-[3px]">Messages</button>
    </div>
    <div className="ml-[5px] border border-r-0 border-gray-300 bg-white pt-[3px] pb-3 pl-[3px]">
      <ResultsTable />
    </div>
  </section>
);

/* ---------- footer ---------- */

const Footer = () => (
  <footer className="border-b border-gray-600 bg-[#f0f0f0] text-gray-900">
    <div className="flex h-[18px] items-center border-b border-gray-300">
      <span className="h-[15px] w-[34px] bg-white pl-1 leading-[15px]">Vue</span>
    </div>
    <div className="flex h-[17px] items-center whitespace-nowrap">
      <div className="flex w-[393px] items-center gap-1 pl-1">
        <Icon size="size-3.5"><path d="M2 8V3h5M2 12v5h4M10 17h6M13 5v6M9 8h8" stroke="#5b2020" strokeWidth="2" /></Icon>
        <Icon size="size-3.5"><path d="M1 3l4 10L9 3" stroke="#8b8410" strokeWidth="3" /><path d="M4 18h10" stroke="#555" /><path d="M13 6c0-4 6-3 5 0 0 2-2 2-2 5M16 13v2" stroke="#333" strokeWidth="1.800" /></Icon>
        <Icon size="size-3.5"><path d="M1 1h7v7H1zM11 1h7v7h-7zM1 11h7v7H1zM11 11h7v7h-7z" fill="#4a2626" /><path d="M3 4h3M13 4h3M3 14h3M13 14h3" stroke="#ddd" /></Icon>
        <Icon size="size-3.5"><path d="M1 3l17 14M18 3L1 17" stroke="#9c1c48" strokeWidth="2" /><path d="M2 11h15M12 4v8" stroke="#222" strokeWidth="1.500" /></Icon>
      </div>
      <div className="flex w-[190px] items-center gap-[5px]">
        <span className="size-[11px] rounded-full border border-green-700 bg-[#25d83c]" />
        Résultats MEF: actuels
      </div>
      <span className="w-[75px] border-x border-gray-300 pl-9">41</span>
      <span className="ml-1 w-4 border-b border-black text-center text-[8px] leading-[9px] font-bold">A-1</span>
      <span className="w-[42px] border-r border-gray-300 pl-[6px]">26</span>
      <span className="flex-1 pl-2.5">UPN 300</span>
      <span className="flex w-[174px] items-center gap-1.5 border-l border-gray-300 pl-1">
        <Icon size="size-3"><path d="M4 0v20M0 16h20" stroke="#222" strokeWidth="2" /><path d="M6 5h9v9" stroke="#b64545" strokeDasharray="2 2" strokeWidth="2" /></Icon>
        x=9,88; y=1,45; z=0,00
      </span>
      <span className="flex w-[86px] items-center gap-1 border-l border-gray-300 pl-1">
        <Icon size="size-3"><path d="M1 5h18M1 15h18" stroke="#222" strokeWidth="2.500" /><path d="M3 8v5M17 8v5" stroke="#b64545" strokeWidth="2" /></Icon>
        0,00
      </span>
      <span className="w-[84px] overflow-hidden border-l border-gray-300 pl-1.5">[m] [daN] [Deg]</span>
    </div>
  </footer>
);

const App = () => (
  <div className="relative flex h-screen flex-col overflow-hidden bg-white font-['Open_Sans','Noto_Sans',sans-serif] text-[10px] leading-[14px]">
    <Header />
    <Toolbars />
    <main className="grid min-h-0 flex-1 grid-cols-[835fr_363fr] border-t border-gray-500 bg-white pl-0.5">
      <ViewWindow />
      <div className="min-h-0 pb-px">
        <CalcWindow />
      </div>
    </main>
    <Footer />
    <div className="absolute top-20 right-[72px] flex h-3 w-[57px] justify-end bg-[#f0f0f0] shadow-md">
      <span className="mt-1.5 mr-0.5 h-2 w-4 bg-gray-300" />
    </div>
    <ResultsWindow />
    <div className="pointer-events-none absolute top-[316px] left-[449px] font-['Liberation_Sans',Arial,sans-serif] text-[40px] leading-[46px] font-bold whitespace-nowrap opacity-75 [-webkit-text-stroke:1px]">
      <span className="text-[#f7c52b]">Oued</span>
      <span className="text-[#58b4e2]">kniss</span>
      <span className="text-[#6d6d6d]">.com</span>
    </div>
  </div>
);

export default App;
